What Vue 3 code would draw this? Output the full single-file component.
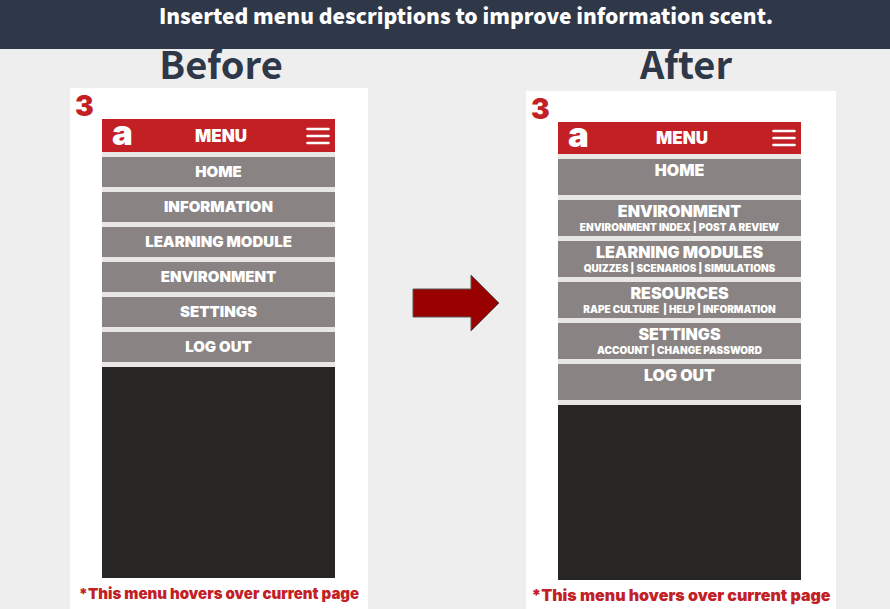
<script setup>
const screens = [
  {
    id: 'before',
    title: 'Before',
    items: [
      { name: 'HOME' },
      { name: 'INFORMATION' },
      { name: 'LEARNING MODULE' },
      { name: 'ENVIRONMENT' },
      { name: 'SETTINGS' },
      { name: 'LOG OUT' },
    ],
  },
  {
    id: 'after',
    title: 'After',
    items: [
      { name: 'HOME' },
      { name: 'ENVIRONMENT', detail: 'ENVIRONMENT INDEX | POST A REVIEW' },
      { name: 'LEARNING MODULES', detail: 'QUIZZES | SCENARIOS | SIMULATIONS' },
      { name: 'RESOURCES', detail: 'RAPE CULTURE  | HELP | INFORMATION' },
      { name: 'SETTINGS', detail: 'ACCOUNT | CHANGE PASSWORD' },
      { name: 'LOG OUT' },
    ],
  },
]
</script>

<template>
  <header class="banner">
    <h1>Inserted menu descriptions to improve information scent.</h1>
  </header>
  <main class="comparison">
    <section v-for="screen in screens" :key="screen.id" class="column" :class="screen.id">
      <h2>{{ screen.title }}</h2>
      <div class="card">
        <p class="step">3</p>
        <div class="phone">
          <div class="bar">
            <span class="logo">a</span>
            <span class="bar-title">MENU</span>
            <button class="toggle" type="button" aria-label="Menu">
              <svg viewBox="0 0 24 18" width="24" height="18" aria-hidden="true">
                <path d="M1.5 2H22.5M1.5 9H22.5M1.5 16H22.5" stroke="#fff" stroke-width="2.6" stroke-linecap="round" />
              </svg>
            </button>
          </div>
          <nav class="menu">
            <a v-for="item in screen.items" :key="item.name" href="#" class="item">
              <span class="name">{{ item.name }}</span>
              <span v-if="item.detail" class="detail">{{ item.detail }}</span>
            </a>
          </nav>
          <div class="page"></div>
        </div>
        <p class="note">*This menu hovers over current page</p>
      </div>
    </section>
    <svg class="arrow" viewBox="0 0 88 58" aria-hidden="true">
      <path d="M1 15H59V1L87 29L59 57V43H1Z" fill="#990000" stroke="#595959" stroke-width="1" />
    </svg>
  </main>
</template>

<style>
body {
  margin: 0;
  background: #eeeeee;
}
</style>

<style scoped>
h1,
h2,
p {
  margin: 0;
}

.banner {
  box-sizing: border-box;
  height: 49px;
  padding-left: 42px;
  background: #2f3849;
}

h1 {
  color: #fff;
  font: 900 21px/30px "Noto Sans CJK SC", sans-serif;
  text-align: center;
}

.comparison {
  display: grid;
  grid-template-columns: 298fr 158fr 310fr;
  padding: 0 54px 0 70px;
  align-items: start;
}

.column {
  grid-row: 1;
  font-family: Inter, sans-serif;
  font-weight: 900;
}

.before {
  grid-column: 1;
}

.after {
  grid-column: 3;
}

h2 {
  height: 39px;
  padding-left: 4px;
  color: #2f3849;
  font: 700 38px/28px "Noto Sans CJK SC", sans-serif;
  text-align: center;
}

.after h2 {
  height: 42px;
  padding-left: 10px;
}

.card {
  padding: 0 5px;
  background: #fff;
}

.step {
  height: 31px;
  color: #c32026;
  font-size: 28px;
  line-height: 36px;
}

.phone {
  margin: 0 28px 0 27px;
  background: #e8e7e6;
}

.after .phone {
  margin-right: 30px;
}

.bar {
  display: grid;
  grid-template-columns: 1fr auto 1fr;
  align-items: center;
  height: 33px;
  padding: 0 5px 0 10px;
  background: #c32026;
  color: #fff;
}

.after .bar {
  height: 32px;
}

.logo {
  font-size: 35px;
  line-height: 22px;
  height: 30px;
}

.bar-title {
  font-size: 17px;
}

.toggle {
  justify-self: end;
  display: flex;
  padding: 0;
  border: 0;
  background: none;
}

.menu {
  display: grid;
  gap: 5px;
  padding: 5px 0;
}

.item {
  display: flex;
  flex-direction: column;
  align-items: center;
  height: 30px;
  background: #898483;
  color: #fff;
  text-decoration: none;
  white-space: pre;
}

.name {
  font-size: 15px;
  line-height: 30px;
}

.after .item {
  height: 36px;
}

.after .name {
  font-size: 16px;
  line-height: 22px;
}

.detail {
  font-size: 10px;
  line-height: 10px;
}

.page {
  height: 211px;
  background: #272624;
}

.after .page {
  height: 175px;
}

.note {
  color: #c32026;
  font-size: 15px;
  line-height: 31px;
  text-align: center;
  white-space: nowrap;
}

.after .note {
  font-size: 16px;
}

.arrow {
  grid-row: 1;
  grid-column: 2;
  width: 88px;
  margin: 225px 0 0 18px;
  justify-self: center;
}
</style>
